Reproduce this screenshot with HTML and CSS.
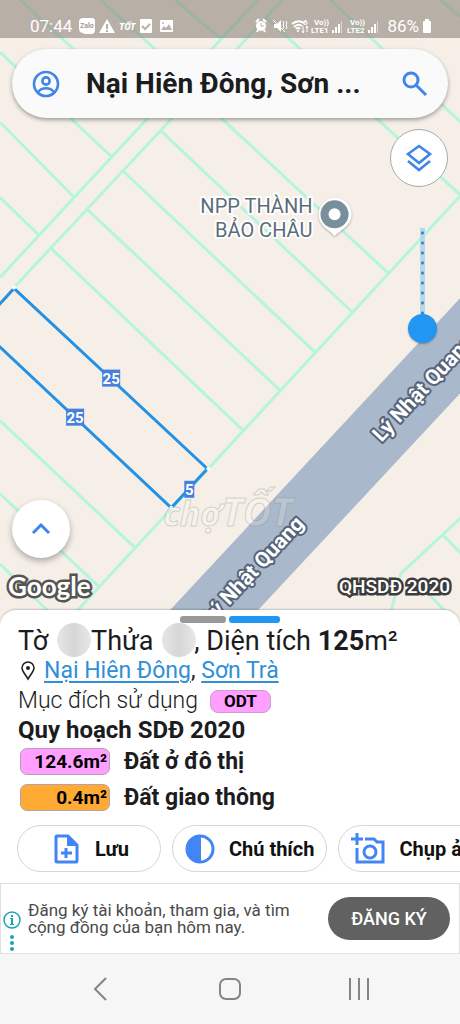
FILE: index.html
```
<!DOCTYPE html>
<html lang="vi">
<head>
    <meta charset="UTF-8">
    <meta name="viewport" content="width=device-width, initial-scale=1.0">
    <title>Bản đồ quy hoạch</title>
    <link rel="stylesheet" href="styles.css">
</head>
<body>
    <div class="app">
        <main class="map">
            <svg class="map-canvas" viewBox="0 0 460 625" preserveAspectRatio="xMinYMin slice" aria-hidden="true">
                <!-- Road -->
                <path class="road" d="M155 625L460 297V392L243 625Z"/>
                <!-- Parcel borders -->
                <path class="parcels" d="M0 277L257 0M14 287L282 0M460 195L315 352L63 625
                    M0 52L112 157M0 122L74 197M0 197L39 235M20 0L148 118M100 0L186 77M175 0L221 39
                    M50 247L243 430M87 209L280 390M122 170L315 352M160 130L352 312M194 93L388 273
                    M265 17L460 195M330 0L460 122M440 0L460 17
                    M0 420L135 547M0 493L98 585M0 563L60 622
                    M460 517L400 573L390 612M443 535L460 552M430 595L448 614"/>
                <!-- Selected parcel -->
                <path class="selected" d="M-8 312L14 288L207 468L171 507L-8 339"/>
                <g class="corner">
                    <circle cx="14" cy="287" r="2"/>
                    <circle cx="208" cy="468" r="2"/>
                    <circle cx="171" cy="507" r="2"/>
                </g>
                <text class="watermark" x="163" y="525">chợ<tspan class="watermark-big">TỐT</tspan></text>
                <g class="edge">
                    <rect x="102" y="369" width="18" height="17"/>
                    <rect x="66" y="408" width="18" height="17"/>
                    <rect x="184" y="480" width="10" height="17"/>
                    <text x="111" y="383">25</text>
                    <text x="75" y="422">25</text>
                    <text x="189" y="494">5</text>
                </g>
                <text class="road-name" transform="translate(381 442) rotate(-47)">Lý Nhật Quang</text>
                <text class="road-name" transform="translate(211 624) rotate(-47)">Lý Nhật Quang</text>
                <text class="place" x="312" y="213">NPP THÀNH</text>
                <text class="place" x="312" y="237">BẢO CHÂU</text>
                <path class="pin" d="M334 236C330 230 318 226 318 214A16 16 0 0 1 351 214C351 226 339 230 334 236Z"/>
                <circle cx="334" cy="214" r="14" fill="#78909c"/>
                <circle cx="334" cy="214" r="6" fill="#fff"/>
            </svg>

            <div class="status-bar">
                <span class="clock">07:44</span>
                <svg width="96" height="16" viewBox="0 0 96 16" fill="#fff">
                    <path d="M4 0h9q3 0 3 3v9q0 4-4 4H6L1 14q-1-2-1-4V4q0-4 4-4z"/>
                    <text class="zalo" x="1" y="10">Zalo</text>
                    <path d="M28 1l8 14H20z"/>
                    <path d="M28 6v5m0 1v2" stroke="#b9b0a8" stroke-width="2"/>
                    <text class="tot" x="40" y="12">TỐT</text>
                    <rect x="61" y="1" width="12" height="14" rx="1"/>
                    <path d="M63 8l3 3 5-5" fill="none" stroke="#b9b0a8" stroke-width="2"/>
                    <rect x="81" y="2" width="13" height="12" rx="1"/>
                    <path d="M82 12l3-4 2 2 3-4 3 6z" fill="#b9b0a8"/>
                    <circle cx="84" cy="5" r="1" fill="#b9b0a8"/>
                </svg>
                <svg class="status-right" width="130" height="16" viewBox="0 0 130 16" fill="#fff">
                    <circle cx="7" cy="8" r="5"/>
                    <path d="M2 4l3-3M12 4L9 1M4 12l-1 2m7-2l1 2" stroke="#fff" stroke-width="2"/>
                    <path d="M7 5v3h3" stroke="#b9b0a8" fill="none"/>
                    <path d="M20 6h3l4-4v12l-4-4h-3z"/>
                    <path d="M19 2l12 12M29 3l1 2-1 2 1 2-1 2M32 3l1 2-1 2 1 2-1 2" stroke="#fff" fill="none"/>
                    <g fill="none" stroke="#fff">
                        <path d="M38 6q6-5 12-1M40 9q4-4 8-1M42 11q2-2 4 0" stroke-width="2"/>
                        <path d="M49 8v6m-1-1l1 2 1-2M53 14V8m-1 2l1-2 1 2"/>
                    </g>
                    <circle cx="44" cy="13" r="1"/>
                    <text class="tiny" x="49" y="7">6</text>
                    <text class="tiny" x="60" y="7">Vo))</text>
                    <text class="tiny" x="57" y="15">LTE1</text>
                    <path d="M78 12h2v3h-2zM81 9h2v6h-2zM84 6h2v9h-2z"/>
                    <path d="M87 3h1v12h-1z" opacity=".5"/>
                    <text class="tiny" x="96" y="7">Vo))</text>
                    <text class="tiny" x="93" y="15">LTE2</text>
                    <path d="M114 12h2v3h-2zM117 9h2v6h-2zM120 6h2v9h-2z"/>
                    <path d="M123 3h1v12h-1z" opacity=".5"/>
                </svg>
                <span class="percent">86%</span>
                <svg width="10" height="14" viewBox="0 0 10 14" fill="#fff">
                    <path d="M3 0h4v2h1q1 0 1 1v10q0 1-1 1H2q-1 0-1-1V3q0-1 1-1h1z"/>
                </svg>
            </div>

            <form class="search">
                <button type="button" aria-label="Tài khoản">
                    <svg width="28" height="28" viewBox="0 0 28 28" fill="none" stroke="#4285e8" stroke-width="2.6">
                        <circle cx="14" cy="14" r="12"/>
                        <circle cx="14" cy="11" r="3.6"/>
                        <path d="M6 22c4-5 12-5 16 0"/>
                    </svg>
                </button>
                <input type="text" aria-label="Tìm kiếm" value="Nại Hiên Đông, Sơn ...">
                <button type="submit" aria-label="Tìm">
                    <svg width="28" height="28" viewBox="0 0 28 28" fill="none" stroke="#4285e8" stroke-width="3">
                        <circle cx="11" cy="10" r="7"/>
                        <path d="M16 15l10 10"/>
                    </svg>
                </button>
            </form>

            <button class="round layers" type="button" aria-label="Lớp bản đồ">
                <svg width="28" height="28" viewBox="0 0 28 28" fill="none" stroke="#4285e8" stroke-width="2.6">
                    <path d="M14 2l11 8-11 9-11-9z"/>
                    <path d="M3 17l11 9 11-9"/>
                </svg>
            </button>
            <input class="opacity" type="range" min="0" max="100" value="100" aria-label="Độ mờ">
            <button class="round expand" type="button" aria-label="Mở rộng">
                <svg width="20" height="12" viewBox="0 0 20 12" fill="none" stroke="#4285e8" stroke-width="3">
                    <path d="M2 10l8-8 8 8"/>
                </svg>
            </button>
            <div class="credits">
                <span class="google">Google</span>
                <span class="plan">QHSDĐ 2020</span>
            </div>
        </main>

        <section class="sheet">
            <div class="handles">
                <span class="handle"></span>
                <span class="handle active"></span>
            </div>
            <h1>Tờ <span class="hidden-no"></span> Thửa <span class="hidden-no"></span>, Diện tích <b>125</b>m²</h1>
            <p class="address">
                <svg width="14" height="20" viewBox="0 0 14 20" fill="none" stroke="#222" stroke-width="1.6">
                    <path d="M7 18C4 13 1 10 1 7a6 6 0 0 1 12 0c0 3-3 6-6 11z"/>
                    <circle cx="7" cy="7" r="2" fill="#222" stroke="none"/>
                </svg>
                <span><a href="#">Nại Hiên Đông</a>, <a href="#">Sơn Trà</a></span>
            </p>
            <p class="purpose">Mục đích sử dụng <span class="tag">ODT</span></p>
            <h2>Quy hoạch SDĐ 2020</h2>
            <ul class="zones">
                <li><span class="area pink">124.6m²</span>Đất ở đô thị</li>
                <li><span class="area orange">0.4m²</span>Đất giao thông</li>
            </ul>
            <div class="actions">
                <button class="save" type="button">
                    <svg width="30" height="30" viewBox="0 0 30 30" fill="none" stroke="#4285f4" stroke-width="3">
                        <path d="M6 2h11l9 9v16q0 1-1 1H6q-1 0-1-1V3q0-1 1-1z"/>
                        <path d="M16 2v10h10z" fill="#4285f4" stroke="none"/>
                        <path d="M15 14v10M10 19h11"/>
                    </svg>
                    Lưu
                </button>
                <button type="button">
                    <svg width="30" height="30" viewBox="0 0 30 30">
                        <circle cx="15" cy="15" r="13" fill="none" stroke="#4285f4" stroke-width="3"/>
                        <path d="M16 2a13 13 0 0 0 0 26z" fill="#4285f4"/>
                    </svg>
                    Chú thích
                </button>
                <button type="button">
                    <svg width="34" height="32" viewBox="0 0 34 32" fill="none" stroke="#4285f4" stroke-width="3">
                        <path d="M6 0v12M0 6h12"/>
                        <path d="M14 6h9l3 3h6v20H6V15"/>
                        <circle cx="19" cy="19" r="6"/>
                    </svg>
                    Chụp ảnh
                </button>
            </div>
        </section>

        <aside class="ad">
            <svg width="20" height="44" viewBox="0 0 20 44" fill="#18a5b5">
                <circle cx="10" cy="10" r="8" fill="none" stroke="#18a5b5" stroke-width="1.5"/>
                <path d="M9 5h2v2H9zM8 8h3v6h1v1H8v-1h1V9H8z"/>
                <circle cx="10" cy="27" r="2"/>
                <circle cx="10" cy="33" r="2"/>
                <circle cx="10" cy="39" r="2"/>
            </svg>
            <p>Đăng ký tài khoản, tham gia, và tìm cộng đồng của bạn hôm nay.</p>
            <button type="button">ĐĂNG KÝ</button>
        </aside>

        <nav class="system-nav">
            <button type="button" aria-label="Quay lại">
                <svg width="26" height="26" viewBox="0 0 26 26"><path d="M19 2L8 13l11 11"/></svg>
            </button>
            <button type="button" aria-label="Trang chủ">
                <svg width="26" height="26" viewBox="0 0 26 26"><rect x="3" y="3" width="20" height="20" rx="6"/></svg>
            </button>
            <button type="button" aria-label="Đa nhiệm">
                <svg width="26" height="26" viewBox="0 0 26 26"><path d="M3 2v22M12 2v22M21 2v22"/></svg>
            </button>
        </nav>
    </div>
</body>
</html>
```
FILE: styles.css
```
* {
    box-sizing: border-box;
}
body {
    margin: 0;
    font-family: Roboto, "Noto Sans", sans-serif;
    color: #1c1c1e;
    background-color: #fff;
}
button {
    font-family: inherit;
    border: none;
    padding: 0;
    background: none;
    cursor: pointer;
}
h1, h2, p, ul {
    margin: 0;
    padding: 0;
}
svg {
    display: block;
    flex-shrink: 0;
}
.app {
    display: flex;
    flex-direction: column;
    min-height: 100vh;
    overflow: hidden;
}

/* Map */
.map {
    position: relative;
    flex: 1;
    min-height: 560px;
    background-color: #f5efe8;
}
.map-canvas {
    position: absolute;
    top: 0;
    left: 0;
    width: 100%;
    height: 100%;
}
.road {
    fill: #a9b8ca;
}
.parcels {
    fill: none;
    stroke: #b5f5dc;
    stroke-width: 3;
}
.selected {
    fill: none;
    stroke: #2491e4;
    stroke-width: 3;
}
.corner {
    fill: #fff;
}
.edge rect {
    fill: #4580dc;
}
.edge text {
    fill: #fff;
    font-size: 15px;
    font-weight: 700;
    text-anchor: middle;
}
.watermark {
    font-family: "Open Sans", sans-serif;
    font-size: 34px;
    font-style: italic;
    font-weight: 700;
    fill: rgba(255, 255, 255, 0.2);
    stroke: rgba(150, 140, 130, 0.35);
    stroke-width: 1;
}
.watermark-big {
    font-size: 39px;
}
.road-name {
    fill: #fff;
    stroke: #56637a;
    stroke-width: 4;
    stroke-linejoin: round;
    paint-order: stroke;
    font-size: 21px;
    font-weight: 700;
}
.place {
    fill: #5c6c7b;
    stroke: #fff;
    stroke-width: 4;
    stroke-linejoin: round;
    paint-order: stroke;
    font-size: 20px;
    text-anchor: end;
}
.pin {
    fill: #fff;
    filter: drop-shadow(0 1px 1px rgba(0, 0, 0, 0.3));
}

/* Status bar */
.status-bar {
    position: relative;
    display: flex;
    align-items: center;
    height: 38px;
    padding: 14px 28px 0 30px;
    color: #fff;
    background-color: rgba(140, 129, 121, 0.58);
}
.clock {
    font-size: 17px;
    margin-right: 7px;
}
.percent {
    font-size: 17px;
    margin: 0 3px;
}
.status-right {
    margin-left: auto;
}
.zalo {
    font-size: 7px;
    font-weight: 700;
    fill: #a39a92;
}
.tot {
    font-size: 9px;
    font-weight: 900;
    font-style: italic;
}
.tiny {
    font-size: 8px;
    font-weight: 700;
}

/* Search box */
.search {
    position: relative;
    display: flex;
    align-items: center;
    height: 69px;
    margin: 11px 12px 0;
    padding: 0 20px;
    border-radius: 35px;
    background-color: #fafafa;
    box-shadow: 0 2px 4px rgba(0, 0, 0, 0.35);
}
.search input {
    flex: 1;
    min-width: 0;
    margin: 0 24px 0 26px;
    padding: 0;
    border: none;
    outline: none;
    background: none;
    font-family: inherit;
    font-size: 28px;
    font-weight: 700;
    color: #1c1c1e;
    text-overflow: ellipsis;
}

/* Map controls */
.round {
    position: absolute;
    display: flex;
    align-items: center;
    justify-content: center;
    width: 58px;
    height: 58px;
    border-radius: 50%;
    background-color: #fff;
}
.layers {
    top: 129px;
    right: 12px;
    border: 1px solid #aaa;
}
.expand {
    left: 12px;
    bottom: 68px;
    box-shadow: 0 3px 6px rgba(0, 0, 0, 0.3);
}
.opacity {
    position: absolute;
    top: 228px;
    right: 23px;
    width: 29px;
    height: 115px;
    margin: 0;
    appearance: none;
    writing-mode: vertical-lr;
    background:
        radial-gradient(circle at center, #3c86bd 1px, transparent 2px) center top / 5px 10px repeat-y,
        linear-gradient(#b4d8ee, #b4d8ee) center top / 5px 90px no-repeat;
}
.opacity::-webkit-slider-thumb {
    appearance: none;
    width: 29px;
    height: 29px;
    border-radius: 50%;
    background-color: #2196f3;
    box-shadow: 0 1px 2px rgba(0, 0, 0, 0.3);
}
.credits {
    position: absolute;
    left: 8px;
    right: 10px;
    bottom: 25px;
    display: flex;
    justify-content: space-between;
    align-items: center;
    color: #fff;
    -webkit-text-stroke: 5px #3c3c3c;
    paint-order: stroke fill;
}
.google {
    font-family: Lato, sans-serif;
    font-size: 26px;
    font-weight: 700;
    line-height: 30px;
    -webkit-text-stroke-color: #555;
}
.plan {
    font-size: 19px;
    font-weight: 500;
}

/* Bottom sheet */
.sheet {
    position: relative;
    margin-top: -16px;
    padding: 6px 0 11px 18px;
    border-radius: 16px 16px 0 0;
    background-color: #fff;
    box-shadow: 0 -1px 2px rgba(0, 0, 0, 0.2);
}
.handles {
    display: flex;
    justify-content: center;
    gap: 3px;
    margin-left: -18px;
}
.handle {
    width: 46px;
    height: 7px;
    border-radius: 3px;
    background-color: #999;
}
.handle.active {
    width: 51px;
    background-color: #2196f3;
}
.sheet h1 {
    margin-top: 2px;
    font-size: 27px;
    font-weight: 400;
    line-height: 32px;
    white-space: nowrap;
}
.hidden-no {
    display: inline-block;
    width: 34px;
    height: 34px;
    margin: -10px -2px -4px 2px;
    border-radius: 50%;
    vertical-align: middle;
    background: linear-gradient(90deg, #e6e6e6, #d6d6d6, #e8e8e8);
}
.hidden-no:first-child {
    margin-right: -6px;
}
.address {
    display: flex;
    align-items: center;
    gap: 9px;
    padding-left: 3px;
    font-size: 23px;
    line-height: 28px;
}
.address a {
    color: #318fd8;
    text-decoration-thickness: 2px;
    text-underline-offset: 3px;
}
.purpose {
    display: flex;
    align-items: center;
    gap: 12px;
    font-size: 23px;
    font-weight: 300;
    line-height: 32px;
}
.tag {
    width: 61px;
    height: 23px;
    border: 1px solid #c9a0c9;
    border-radius: 8px;
    background-color: #ff9fff;
    color: #000;
    font-size: 17px;
    font-weight: 700;
    line-height: 21px;
    text-align: center;
}
.sheet h2 {
    font-size: 24px;
    font-weight: 700;
    line-height: 26px;
}
.zones {
    list-style: none;
}
.zones li {
    display: flex;
    align-items: center;
    gap: 14px;
    height: 36px;
    padding-left: 2px;
    font-size: 23px;
    font-weight: 700;
}
.area {
    width: 90px;
    height: 27px;
    padding-right: 2px;
    border: 1px solid #b9a0b0;
    border-radius: 7px;
    color: #000;
    font-size: 19px;
    line-height: 25px;
    text-align: right;
}
.pink {
    background-color: #ff9fff;
}
.orange {
    background-color: #ffaa33;
}
.actions {
    display: flex;
    gap: 11px;
    margin: 10px 0 0 -1px;
    overflow: hidden;
}
.actions button {
    display: flex;
    flex-shrink: 0;
    align-items: center;
    gap: 14px;
    height: 47px;
    padding: 0 12px;
    border: 1px solid #d5d5d8;
    border-radius: 24px;
    color: #111;
    font-size: 20px;
    font-weight: 700;
}
.actions .save {
    padding: 0 31px 0 33px;
}

/* Ad banner */
.ad {
    display: flex;
    align-items: center;
    height: 71px;
    padding: 0 9px 0 1px;
    border: 1px solid #e0e0e0;
}
.ad svg {
    margin-top: 26px;
}
.ad p {
    flex: 1;
    margin: 0 32px 0 6px;
    font-size: 17px;
    line-height: 17px;
    color: #4a4a4a;
}
.ad button {
    width: 122px;
    height: 43px;
    border-radius: 22px;
    background-color: #616161;
    color: #fff;
    font-size: 18px;
    font-weight: 500;
}

/* Android navigation */
.system-nav {
    display: flex;
    justify-content: space-between;
    height: 70px;
    padding: 2px 87px;
    background-color: #f6f6f6;
}
.system-nav svg {
    fill: none;
    stroke: #858585;
    stroke-width: 2;
}
```
